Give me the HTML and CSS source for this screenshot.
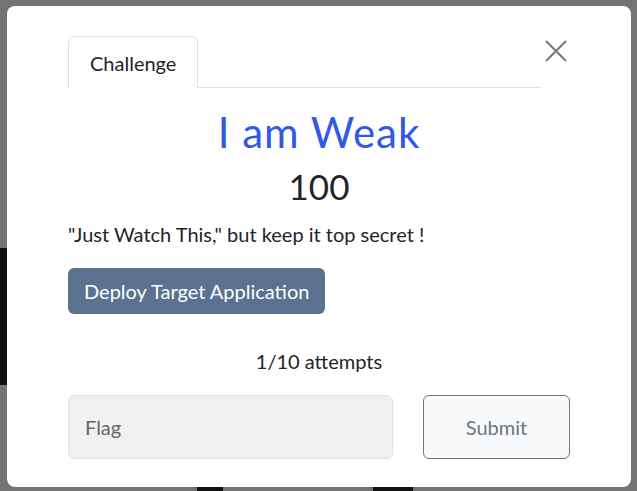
FILE: index.html
```html
<!DOCTYPE html>
<html lang="en">
<head>
  <meta charset="UTF-8" />
  <meta name="viewport" content="width=device-width, initial-scale=1.0"/>
  <title>Challenge - I am Weak</title>
  <link rel="stylesheet" href="styles.css">
</head>
<body>
  <div class="backdrop-strip"></div>
  <div class="backdrop-foot foot-a"></div>
  <div class="backdrop-foot foot-b"></div>
  <div class="modal">
    <div class="modal-head">
      <ul class="tabs">
        <li class="tab active">Challenge</li>
      </ul>
      <button class="close" aria-label="Close">
        <svg width="22" height="22" viewBox="0 0 22 22"><path d="M1 1 L21 21 M21 1 L1 21" stroke="#777" stroke-width="2" fill="none"/></svg>
      </button>
    </div>
    <h2 class="title">I am Weak</h2>
    <h3 class="value">100</h3>
    <p class="desc">"Just Watch This," but keep it top secret !</p>
    <button class="deploy">Deploy Target Application</button>
    <p class="attempts">1/10 attempts</p>
    <form class="flag-form">
      <input type="text" class="flag-input" placeholder="Flag">
      <button type="button" class="submit">Submit</button>
    </form>
  </div>
</body>
</html>
```

FILE: styles.css
```css
body { font-family: Lato, "Open Sans", sans-serif; background: #737373; margin: 0; padding: 6px 6px 4px 7px; color: #212529; position: relative; height: 481px; overflow: hidden; }
.backdrop-strip { position: absolute; left: 0; top: 248px; width: 12px; height: 137px; background: #111; }
.backdrop-foot { position: absolute; bottom: 0; height: 6px; background: #111; }
.foot-a { left: 197px; width: 26px; }
.foot-b { left: 373px; width: 40px; }
.modal { position: relative; width: 624px; height: 481px; box-sizing: border-box; background: #fff; border-radius: 8px; padding: 30px 61px 0 61px; }
.modal-head { display: flex; align-items: flex-start; }
.tabs { flex: 1; display: flex; list-style: none; margin: 0 4px 0 0; padding: 0; border-bottom: 1px solid #e3e3e3; }
.tab { font-size: 20px; padding: 0 21px; line-height: 52px; border: 1px solid #e3e3e3; border-bottom: none; border-radius: 6px 6px 0 0; margin-bottom: -1px; background: #fff; height: 52px; box-sizing: border-box; }
.close { border: none; background: none; padding: 0; margin-top: 4px; width: 25px; height: 22px; text-align: left; cursor: pointer; }
.title { font-size: 42px; font-weight: 400; letter-spacing: 1px; color: #3358e6; text-align: center; margin: 16px 0 0; line-height: 56px; }
.value { font-size: 35px; font-weight: 400; text-align: center; margin: 4px 0 0; line-height: 44px; }
.desc { font-size: 20px; margin: 12px 0 0; line-height: 28px; }
.deploy { margin-top: 20px; font-family: inherit; font-size: 20px; color: #fff; background: #5a7190; border: none; border-radius: 6px; height: 46px; padding: 0 16px; }
.attempts { text-align: center; font-size: 20px; margin: 33px 0 0; line-height: 28px; }
.flag-form { display: flex; gap: 30px; margin-top: 20px; }
.flag-input { width: 325px; height: 64px; box-sizing: border-box; background: #f0f0f0; border: 1px solid #e2e2e2; border-radius: 6px; padding: 0 16px; font-family: inherit; font-size: 20px; }
.flag-input::placeholder { color: #666; }
.submit { width: 147px; height: 64px; font-family: inherit; font-size: 20px; color: #6c757d; background: #f8f9fa; border: 1px solid #6c757d; border-radius: 6px; }
```
